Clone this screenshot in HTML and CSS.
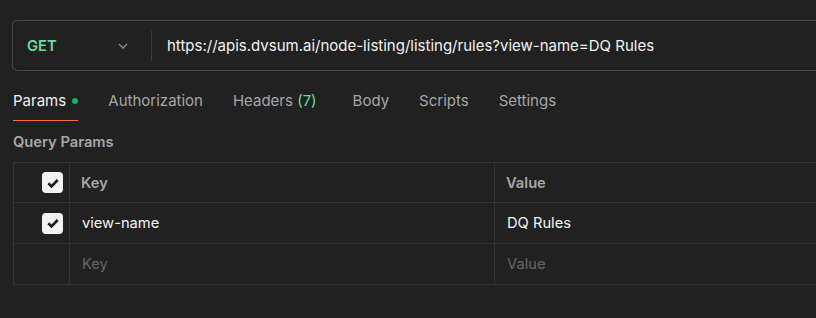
FILE: index.html
```html
<!DOCTYPE html>
<html lang="en">
  <head>
    <meta charset="UTF-8" />
    <title>Request</title>
    <link rel="stylesheet" href="styles.css">
  </head>
  <body>
    <div class="url-bar">
      <div class="method">
        <span class="method-name">GET</span>
        <svg class="chevron" width="12" height="12" viewBox="0 0 12 12"><path d="M2 4l4 4 4-4" fill="none" stroke="#8f8f8f" stroke-width="1.3"/></svg>
      </div>
      <div class="divider"></div>
      <div class="url">https://apis.dvsum.ai/node-listing/listing/rules?view-name=DQ Rules</div>
    </div>

    <nav class="tabs">
      <div class="tab active">Params <span class="dot"></span></div>
      <div class="tab">Authorization</div>
      <div class="tab headers">Headers <span class="count">(7)</span></div>
      <div class="tab">Body</div>
      <div class="tab">Scripts</div>
      <div class="tab">Settings</div>
    </nav>

    <div class="section-title">Query Params</div>

    <div class="params">
      <div class="row head">
        <div class="cell check"><span class="box"><svg width="14" height="14" viewBox="0 0 14 14"><path d="M2.3 7.3l3.2 3.1 6.2-6.4" fill="none" stroke="#1c1c1c" stroke-width="2.6"/></svg></span></div>
        <div class="cell key">Key</div>
        <div class="cell value">Value</div>
      </div>
      <div class="row">
        <div class="cell check"><span class="box"><svg width="14" height="14" viewBox="0 0 14 14"><path d="M2.3 7.3l3.2 3.1 6.2-6.4" fill="none" stroke="#1c1c1c" stroke-width="2.6"/></svg></span></div>
        <div class="cell key filled">view-name</div>
        <div class="cell value filled">DQ Rules</div>
      </div>
      <div class="row">
        <div class="cell check"></div>
        <div class="cell key empty">Key</div>
        <div class="cell value empty">Value</div>
      </div>
    </div>
  </body>
</html>
```

FILE: styles.css
```css
body {
  font-family: 'Inter', sans-serif;
  font-size: 14.7px;
  margin: 0;
  padding: 0;
  background: #212121;
  color: #f2f2f2;
  overflow: hidden;
}

.url-bar {
  display: flex;
  align-items: center;
  height: 49px;
  margin: 20px -20px 0 12px;
  border: 1px solid #474747;
  border-radius: 5px;
}

.method {
  display: flex;
  align-items: center;
  justify-content: space-between;
  width: 138px;
  padding: 0 22px 0 14px;
  box-sizing: border-box;
}

.method-name {
  color: #6bdd9a;
  font-weight: 600;
}

.divider {
  width: 1px;
  height: 30px;
  background: #3c3c3c;
}

.url {
  padding-left: 15px;
  color: #f2f2f2;
  font-size: 15px;
}

.tabs {
  display: flex;
  gap: 30px;
  margin: 19px 0 0 13px;
  font-size: 15px;
}

.tab {
  color: #a6a6a6;
  padding-bottom: 8px;
  border-bottom: 1px solid transparent;
  line-height: 22px;
}

.tab.active {
  color: #f2f2f2;
  border-bottom-color: #ff6c37;
}

.tab.headers {
  margin-right: 6px;
}

.dot {
  display: inline-block;
  width: 6px;
  height: 6px;
  border-radius: 50%;
  background: #0cbb52;
  margin-left: 2px;
  vertical-align: 2px;
}

.count {
  color: #6bdd9a;
}

.section-title {
  margin: 12px 0 0 13px;
  color: #a6a6a6;
  font-weight: 600;
  line-height: 19px;
}

.params {
  margin: 10px -20px 0 13px;
  border-top: 1px solid #333;
  border-left: 1px solid #333;
}

.row {
  display: flex;
  height: 40px;
  border-bottom: 1px solid #333;
}

.row.head {
  height: 39px;
}

.cell {
  display: flex;
  align-items: center;
  box-sizing: border-box;
}

.check {
  width: 56px;
  padding-left: 28px;
  border-right: 1px solid #333;
}

.key {
  width: 425px;
  padding-left: 11px;
  border-right: 1px solid #333;
}

.value {
  flex: 1;
  padding-left: 11px;
}

.head .cell {
  color: #a6a6a6;
  font-weight: 600;
}

.filled {
  color: #f2f2f2;
  padding-left: 12px;
}

.empty {
  color: #666;
  padding-left: 12px;
}

.box {
  display: flex;
  align-items: center;
  justify-content: center;
  width: 21px;
  height: 21px;
  background: #f2f2f2;
  border-radius: 4px;
}
```
